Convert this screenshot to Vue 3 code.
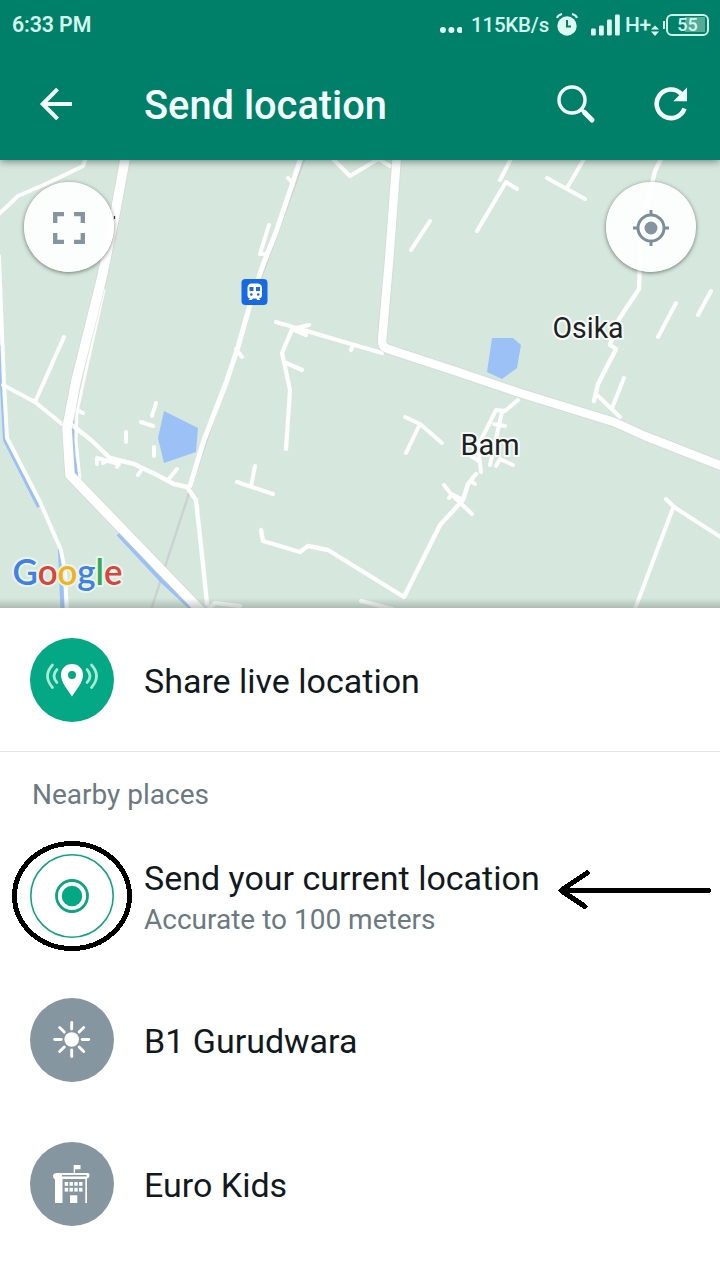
<script setup>
const arterials = [
  { d: 'M126 154 L115 214 L102 277 L76 381 L67 428 L70 475 L124 531 L202 612', w: 9.5 },
  { d: 'M397 154 L389 261 L382 341 Q382 347 388 349 L455 371 L520 393 L614 422 L645 436 L724 467', w: 8.5 },
]
const roads = [
  { d: 'M302 154 L292 185 L276 232 L263 265 L253 294 L238 347 L226 383 L204 440 L190 486', w: 5 },
  { d: 'M288 178 L293 183 M269 225 L260 254 L266 254 M236 349 L242 357', w: 4 },
  { d: 'M87 155 L83 166 L48 183 L18 196 L-2 215', w: 4 },
  { d: 'M-1 256 L4 385 L7 438 L40 502 L61 550 L65 572 L67 610', w: 4 },
  { d: 'M3 385 L35 402 L62 424 M35 402 L64 337', w: 4 },
  { d: 'M104 290 L87 366 L77 412 L76 440 L80 480', w: 3 },
  { d: 'M72 425 L91 440 L110 458 L134 464 L155 474 L174 484 L187 487 L196 500 L202 555 L207 604', w: 4.4 },
  { d: 'M75 409 L83 413 M97 464 L97 458 L119 464 M103 463 L110 459 M117 467 L119 463 M138 475 L142 469 M168 480 L177 469', w: 4 },
  { d: 'M156 403 L152 416 M141 422 L153 426 M126 432 L126 442 M154 447 L154 456', w: 4 },
  { d: 'M205 612 L215 603 L240 606', w: 4 },
  { d: 'M332 158 L350 176 L375 161 L379 159 L390 166', w: 4 },
  { d: 'M430 221 L411 250', w: 4 },
  { d: 'M512 157 L500 180 M506 182 L477 231 M506 182 L517 189', w: 4 },
  { d: 'M547 178 L585 199 M567 188 L584 159', w: 4 },
  { d: 'M662 157 L655 171 L641 230 L639 289 L619 319 L610 345 L616 349 L598 384 L594 401', w: 4.4 },
  { d: 'M596 394 L620 417 M612 408 L624 378', w: 4 },
  { d: 'M676 303 L658 337 M711 291 L698 315', w: 4 },
  { d: 'M276 322 L382 353 M309 325 L292 329 L306 335 M293 327 L282 353 L290 390 L286 449 M284 362 L302 370 M353 345 L351 350', w: 4.2 },
  { d: 'M405 417 L420 424 L442 443 M419 426 L406 453', w: 4 },
  { d: 'M255 466 L251 486 M237 482 L273 494', w: 4 },
  { d: 'M261 530 L263 541 L300 552 L308 546 L328 550 L404 597 L440 525 L463 500 L468 484 L476 474', w: 4.4 },
  { d: 'M444 485 L451 494 L472 514 M449 498 L452 494 L463 500 M471 481 L475 484', w: 4 },
  { d: 'M518 400 L505 411 L496 410 L484 434 L478 445 L481 472 M502 412 L490 465 M494 424 L505 426 M496 466 L500 459 L513 465 M470 455 L480 462', w: 4 },
  { d: 'M361 601 L392 609', w: 4 },
  { d: 'M666 499 L674 507 L722 538 M673 508 L635 609', w: 4 },
]
const water = [
  'M1 345 L2 385 L5 440 L39 507',
  'M72 420 L73 455 L77 477',
  'M60 549 L62.500 612',
  'M118 534 L162 581 L193 610',
]
const bars = [7, 10, 16, 21]
const rays = [0, 45, 90, 135, 180, 225, 270, 315]
const windows = [0, 1, 2, 3]
</script>

<template>
  <main class="screen">
    <header class="header">
      <div class="status">
        <span class="time">6:33 PM</span>
        <div class="status-right">
          <svg class="dots" width="22" height="26" viewBox="0 0 22 26"><circle v-for="i in 3" :key="i" :cx="i * 8.5 - 5.6" cy="18" r="3" /></svg>
          <span class="speed">115KB/s</span>
          <svg class="alarm" width="22" height="26" viewBox="0 0 22 26">
            <circle cx="11" cy="14" r="9.700" />
            <path class="bell" d="M1 6 Q2 3 6 2 M21 6 Q20 3 16 2" />
            <path class="hand" d="M11 8 V14.5 H15" />
          </svg>
          <svg class="signal" width="29" height="26" viewBox="0 0 29 26">
            <rect v-for="(h, i) in bars" :key="h" :x="i * 8" :y="23.5 - h" width="4.800" :height="h" rx="1.2" />
          </svg>
          <span class="net">H+</span>
          <svg class="updown" width="8" height="26" viewBox="0 0 8 26"><path d="M0 17.5 L4 13.5 L8 17.5 Z M0 19.5 H8 L4 24 Z" /></svg>
          <div class="battery"><span>55</span></div>
        </div>
      </div>
      <div class="toolbar">
        <svg class="back" width="34" height="34" viewBox="0 0 34 34"><path d="M33 17 H4 M18.5 2.2 L3.7 17 L18.5 31.8" /></svg>
        <h1>Send location</h1>
        <svg class="search" width="40" height="40" viewBox="0 0 40 40">
          <circle cx="15" cy="15" r="13" />
          <path class="neck" d="M24 24 L28 28" /><path class="grip" d="M27.5 27.5 L35 35" />
        </svg>
        <svg class="refresh" width="36" height="36" viewBox="0 0 36 36">
          <path class="arc" d="M31.5 22.500 A14.3 14.3 0 1 1 28 7.600" />
          <path class="tip" d="M34 1.5 V15.2 H20.3 Z" />
        </svg>
      </div>
    </header>

    <section class="map">
      <svg class="canvas" width="720" height="448" viewBox="0 160 720 448">
        <path class="rail" d="M304 160 L255 294 L191 487 L151 610" />
        <path v-for="d in water" :key="d" class="stream" :d="d" />
        <path class="lake" d="M164 411 L198 428 L196 452 L164 463 L158 438 Z" />
        <path class="lake" d="M492 338 H513 L521 345 L517 368 L502 379 L487 372 Z" />
        <path v-for="r in roads" :key="r.d" class="road" :d="r.d" :stroke-width="r.w" />
        <g v-for="r in arterials" :key="r.d">
          <path class="casing" :d="r.d" :stroke-width="r.w + 2" />
          <path class="road main" :d="r.d" :stroke-width="r.w" />
        </g>
        <rect x="241.5" y="279" width="26" height="26" rx="4" fill="#176ae0" />
        <path fill="#fff" d="M251 283.500 H258 Q262 284 262 288 V295 Q262 298 259 298.500 L260.500 300 H257.500 L256 298.500 H253 L251.500 300 H248.500 L250 298.500 Q247.500 298 247.500 295 V288 Q247.500 284 251 283.500 Z" />
        <path fill="#176ae0" d="M249.500 287 H253.500 V291 H249.500 Z M256 287 H260 V291 H256 Z" />
        <circle cx="251.300" cy="294.500" r="1.300" fill="#176ae0" /><circle cx="258.200" cy="294.500" r="1.300" fill="#176ae0" />
        <text class="place" x="552.500" y="338" textLength="71" lengthAdjust="spacingAndGlyphs">Osika</text>
        <text class="place" x="460.500" y="455" textLength="59" lengthAdjust="spacingAndGlyphs">Bam</text>
        <text class="google" x="12.500" y="585" textLength="110" lengthAdjust="spacingAndGlyphs"><tspan fill="#4180e4">G</tspan><tspan fill="#db4437">o</tspan><tspan fill="#efb41c">o</tspan><tspan fill="#4180e4">g</tspan><tspan fill="#3aa757">l</tspan><tspan fill="#db4437">e</tspan></text>
        <path d="M114.500 216 V219" stroke="#333" stroke-width="1.200" />
      </svg>
      <button class="fab left" aria-label="Full screen">
        <svg width="32" height="32" viewBox="0 0 32 32"><path d="M11 2.200 H2.200 V11 M21 2.200 H29.800 V11 M11 29.800 H2.200 V21 M21 29.800 H29.800 V21" /></svg>
      </button>
      <button class="fab right" aria-label="My location">
        <svg width="36" height="36" viewBox="0 0 36 36">
          <circle class="ring" cx="18" cy="18" r="13" /><circle class="core" cx="18" cy="18" r="6.500" />
          <path class="ticks" d="M18 0 V5 M18 31 V36 M0 18 H5 M31 18 H36" />
        </svg>
      </button>
    </section>

    <section class="row share">
      <svg class="avatar" width="84" height="84" viewBox="0 0 84 84">
        <circle cx="42" cy="42" r="42" fill="#05a884" />
        <path fill="#fff" fill-rule="evenodd" d="M42 26 C35.500 26 31 30.700 31 37 C31 44.500 38 52 42 58.500 C46 52 53 44.500 53 37 C53 30.700 48.500 26 42 26 Z M42 33 A4 4 0 1 1 42 41 A4 4 0 1 1 42 33 Z" />
        <path class="waves" d="M27 31.500 Q21 38 27 44.500 M22.500 27 Q12.500 38 22.500 49.500 M57 31.500 Q63 38 57 44.500 M61.500 27 Q71.500 38 61.500 49.500" />
      </svg>
      <span class="name">Share live location</span>
    </section>

    <h2>Nearby places</h2>

    <section class="row current">
      <svg class="avatar" width="84" height="84" viewBox="0 0 84 84">
        <g fill="none" stroke="#10a37f"><circle cx="42" cy="42" r="41.200" stroke-width="1.600" /><circle cx="42" cy="42" r="15.500" stroke-width="2.800" /></g>
        <circle cx="42" cy="42" r="10.300" fill="#05a884" />
      </svg>
      <div class="labels">
        <span class="name">Send your current location</span>
        <span class="detail">Accurate to 100 meters</span>
      </div>
      <svg class="marks" width="720" height="144" viewBox="0 824 720 144">
        <ellipse cx="72" cy="896" rx="57.500" ry="52.500" />
        <path d="M708.500 890.500 H562 M587 873 L561 890.500 L585 906.500" stroke-linejoin="round" />
      </svg>
    </section>

    <section class="row">
      <svg class="avatar" width="84" height="84" viewBox="0 0 84 84">
        <circle cx="42" cy="42" r="42" fill="#8696a0" />
        <circle cx="41.700" cy="41.500" r="7.300" fill="#fff" />
        <path v-for="a in rays" :key="a" class="ray" d="M41.700 31 V24.500" :transform="`rotate(${a} 41.7 41.5)`" />
      </svg>
      <span class="name">B1 Gurudwara</span>
    </section>

    <section class="row">
      <svg class="avatar" width="84" height="84" viewBox="0 0 84 84">
        <circle cx="42" cy="42" r="42" fill="#8696a0" />
        <g fill="#fff">
          <path d="M43.700 23 H50.500 V27.300 H45 V31 H58 Q59.500 31 59.500 33 Q59.500 36 57 36.500 V61 H55.300 V37 H32.500 V61 H25 V37.500 Q23 36.500 23 34 Q23 31 27 31 H43.700 Z" />
          <rect x="40" y="53.300" width="7.300" height="7.700" />
          <g v-for="i in windows" :key="i"><rect :x="34.700 + i * 4.800" y="40" width="3.400" height="3.800" /><rect :x="34.700 + i * 4.800" y="45.800" width="3.400" height="3.800" /></g>
        </g>
        <path d="M32 33.700 H56.500" stroke="#8696a0" stroke-width="1.500" />
      </svg>
      <span class="name">Euro Kids</span>
    </section>
  </main>
</template>

<style>
body { margin: 0; background: #fff; }
</style>

<style scoped>
.screen { width: 720px; height: 1280px; overflow: hidden; background: #fff; font-family: Roboto, "Liberation Sans", sans-serif; }
.header { position: relative; z-index: 1; height: 160px; background: #018069; box-shadow: 0 1px 8px rgba(0, 0, 0, .5); color: #f5fffd; }
.status { height: 49px; display: flex; align-items: center; justify-content: space-between; padding: 0 11px 0 12px; box-sizing: border-box; font-weight: 500; font-size: 22px; color: #d4f7ee; }
.time { font-weight: 600; font-size: 21.300px; letter-spacing: -.1px; }
.status-right { display: flex; align-items: center; }
.status svg { fill: #dffaf3; flex: none; }
.speed { margin-left: 9px; width: 77px; font-size: 20.500px; white-space: nowrap; letter-spacing: -.2px; }
.alarm { margin-left: 8px; }
.alarm path { fill: none; stroke: #dffaf3; stroke-width: 2; }
.alarm .hand { stroke: #018069; }
.signal { margin-left: 13px; }
.net { margin-left: 5px; width: 25px; font-size: 21px; white-space: nowrap; letter-spacing: -.4px; }
.updown { margin-left: 1px; }
.battery { position: relative; margin-left: 7px; width: 43px; height: 22px; box-sizing: border-box; border: 2px solid #cdf3e9; border-radius: 6px; background: linear-gradient(#55ab98, #55ab98) right 2px center / 20px 15px no-repeat; display: flex; align-items: center; justify-content: center; font-size: 18px; }
.battery::before { content: ''; position: absolute; left: -5px; top: 5px; width: 2px; height: 8px; background: #cdf3e9; }
.toolbar { height: 111px; display: flex; align-items: center; padding: 0 31px 0 39px; }
.toolbar svg { flex: none; fill: none; stroke: #f4fffc; }
.back { stroke-width: 4; margin-bottom: 1px; }
h1 { margin: 3px auto 0 71px; font-size: 39.800px; font-weight: 500; line-height: 48px; white-space: nowrap; }
.search { margin-right: 56px; stroke-width: 3.4; }
.search .grip { stroke-width: 5; stroke-linecap: round; }
.refresh { stroke-width: 4.600; margin-bottom: 1px; }
.refresh .tip { fill: #f4fffc; stroke: none; }

.map { position: relative; height: 448px; background: #d6e8de; }
.map::after { content: ''; position: absolute; left: 0; right: 0; bottom: 0; height: 10px; background: linear-gradient(rgba(100, 115, 108, 0), rgba(100, 115, 108, .38)); }
.canvas { display: block; }
.road { fill: none; stroke: #fdfefd; stroke-linejoin: round; stroke-linecap: round; }
.main { stroke: #fff; }
.casing { fill: none; stroke: #c8cfcf; stroke-opacity: .35; stroke-linejoin: round; }
.rail { fill: none; stroke: #cbd3d2; stroke-width: 2.500; }
.stream { fill: none; stroke: #9bc0f5; stroke-width: 4; }
.lake { fill: #9cc1f7; }
.place { font-size: 29px; fill: #1d2124; stroke: #f5faf7; stroke-width: 4px; paint-order: stroke; stroke-linejoin: round; }
.google { font-family: Lato, sans-serif; font-size: 36px; font-weight: 600; stroke: #eaf5ef; stroke-width: 4px; paint-order: stroke; stroke-linejoin: round; }
.fab { position: absolute; top: 22px; width: 90px; height: 90px; padding: 0; border: 0; border-radius: 50%; background: rgba(255, 255, 255, .92); box-shadow: 0 1px 4px rgba(0, 0, 0, .5); display: flex; align-items: center; justify-content: center; }
.fab svg { fill: none; stroke: #8494a0; stroke-width: 4.300; margin-top: 2px; }
.left { left: 24px; }
.right { left: 606px; }
.fab .ring { stroke: #7d8e9b; stroke-width: 3; }
.fab .ticks { stroke: #7d8e9b; stroke-width: 3; }
.fab .core { fill: #8494a0; stroke: none; }

.row { position: relative; height: 144px; box-sizing: border-box; display: flex; align-items: center; gap: 30px; padding: 0 30px; }
.share { box-shadow: inset 0 -1px #e2e4e5; }
.avatar { flex: none; }
.waves { fill: none; stroke: #a9ecd6; stroke-width: 2.700; stroke-linecap: round; }
.ray { stroke: #fff; stroke-width: 2.900; stroke-linecap: round; }
.name { font-size: 34px; line-height: 40px; color: #12191e; white-space: nowrap; margin-top: 1px; }
h2 { margin: 0; height: 72px; box-sizing: border-box; padding: 26px 32px 0; font-size: 28px; line-height: 33px; font-weight: 400; color: #6b7981; }
.labels { display: flex; flex-direction: column; }
.detail { font-size: 28px; line-height: 33px; margin-top: 5px; color: #6b7981; white-space: nowrap; }
.marks { position: absolute; left: 0; top: 0; fill: none; stroke: #000; stroke-width: 5; stroke-linecap: round; shape-rendering: crispEdges; }
</style>
